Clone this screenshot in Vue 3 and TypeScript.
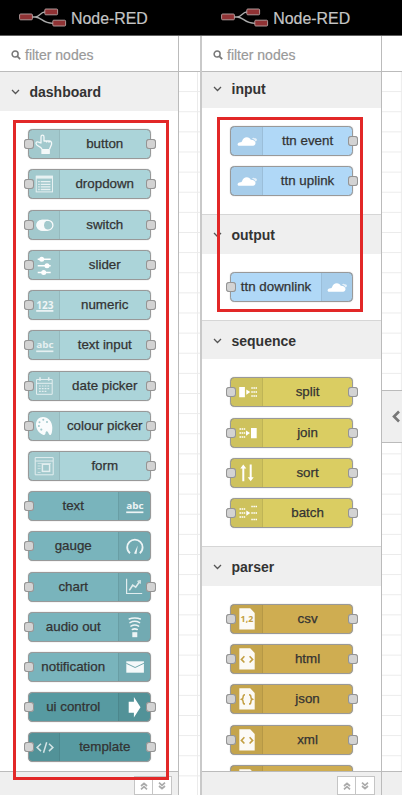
<script setup lang="ts">
interface PaletteNode {
  label: string
  icon: string
  tone: string
  input?: boolean
  output?: boolean
  iconRight?: boolean
}
interface Category {
  name: string
  nodes: PaletteNode[]
}
interface Editor {
  id: string
  categories: Category[]
  tray: boolean
}

const n = (label: string, icon: string, tone: string, ports: string, iconRight = false): PaletteNode => ({
  label,
  icon,
  tone,
  input: ports.includes('i'),
  output: ports.includes('o'),
  iconRight,
})

const editors: Editor[] = [
  {
    id: 'first',
    tray: false,
    categories: [
      {
        name: 'dashboard',
        nodes: [
          n('button', 'hand', 'light', 'io'),
          n('dropdown', 'list', 'light', 'io'),
          n('switch', 'toggle', 'light', 'io'),
          n('slider', 'slider', 'light', 'io'),
          n('numeric', 'numeric', 'light', 'io'),
          n('text input', 'abc', 'light', 'io'),
          n('date picker', 'date', 'light', 'io'),
          n('colour picker', 'palette', 'light', 'io'),
          n('form', 'form', 'light', 'o'),
          n('text', 'abc', 'mid', 'i', true),
          n('gauge', 'gauge', 'mid', 'i', true),
          n('chart', 'chart', 'mid', 'io', true),
          n('audio out', 'audio', 'mid', 'i', true),
          n('notification', 'mail', 'mid', 'i', true),
          n('ui control', 'arrow', 'dark', 'io', true),
          n('template', 'code', 'dark', 'io'),
        ],
      },
    ],
  },
  {
    id: 'second',
    tray: true,
    categories: [
      { name: 'input', nodes: [n('ttn event', 'cloud', 'blue', 'o'), n('ttn uplink', 'cloud', 'blue', 'o')] },
      { name: 'output', nodes: [n('ttn downlink', 'cloud', 'blue', 'i', true)] },
      {
        name: 'sequence',
        nodes: [
          n('split', 'split', 'yellow', 'io'),
          n('join', 'join', 'yellow', 'io'),
          n('sort', 'sort', 'yellow', 'io'),
          n('batch', 'batch', 'yellow', 'io'),
        ],
      },
      {
        name: 'parser',
        nodes: [
          n('csv', 'file-csv', 'ochre', 'io'),
          n('html', 'file-angle', 'ochre', 'io'),
          n('json', 'file-brace', 'ochre', 'io'),
          n('xml', 'file-angle', 'ochre', 'io'),
          n('', 'file', 'ochre', ''),
        ],
      },
    ],
  },
]
</script>

<template>
  <div class="screen">
    <section v-for="ed in editors" :key="ed.id" class="editor" :class="ed.id">
      <header class="topbar">
        <svg class="logo" width="48" height="20" viewBox="0 0 48 20">
          <path d="M13 9h3c5 0 5-5 10-5M16 9c7 0 7 6.300 18 6.300" fill="none" stroke="#aaa" stroke-width="1.300" />
          <g fill="#8f3234" stroke="#b9a5a5" stroke-width=".9">
            <rect x=".6" y="6" width="12.800" height="5.800" rx="1" />
            <rect x="25.800" y="1" width="12.800" height="5.800" rx="1" />
            <rect x="33.800" y="12.200" width="12.800" height="5.800" rx="1" />
          </g>
        </svg>
        <span class="brand">Node-RED</span>
      </header>
      <div class="body">
        <aside class="sidebar">
          <div class="search">
            <svg width="10" height="10" viewBox="0 0 10 10" fill="none" stroke="#777">
              <circle cx="4.100" cy="4.100" r="3" stroke-width="1.500" />
              <path d="M6.400 6.400L9.200 9.200" stroke-width="1.700" />
            </svg>
            <span>filter nodes</span>
          </div>
          <div class="list">
            <section v-for="cat in ed.categories" :key="cat.name" class="category">
              <h2>
                <svg width="9" height="6" viewBox="0 0 9 6"><path d="M1 1l3.500 3.500L8 1" fill="none" stroke="#555" stroke-width="1.300" /></svg>
                <span>{{ cat.name }}</span>
              </h2>
              <div class="nodes">
                <div v-for="node in cat.nodes" :key="node.label" class="node" :class="[node.tone, { flip: node.iconRight }]">
                  <i v-if="node.input" class="port in"></i>
                  <span class="icon">
                    <svg width="32" height="30" viewBox="0 0 32 30" fill="none" stroke="#fff">
                      <g v-if="node.icon === 'hand'" stroke-width="1.300" opacity=".88" stroke-linejoin="round">
                        <path d="M14 20.300c-.5-1.300-1.700-2.300-3.500-3.100-2.600-1.200-3.200-3.600-1.500-4.300 1.200-.5 2 .4 4 1.100V7.900c0-2.300 3-2.300 3 0V12h4.900c2.200 0 3 1.300 2.600 3.500l-2 4.800M18.600 12v1.500M21 12.300v1.400" />
                        <rect x="14" y="20.600" width="7.200" height="3.800" fill="#fff" />
                      </g>
                      <g v-else-if="node.icon === 'list'" opacity=".75">
                        <rect x="8.200" y="7.200" width="16.300" height="15.700" />
                        <path d="M8 8.200h16.800" stroke-width="2.800" />
                        <path d="M10.200 12.700h1.500m1 0h9.700M10.200 15.300h1.500m1 0h9.700M10.200 17.900h1.500m1 0h9.700M10.200 20.500h1.500m1 0h9.700" stroke-width="1.300" />
                      </g>
                      <g v-else-if="node.icon === 'toggle'" opacity=".92" stroke-width="1.300">
                        <rect x="8.900" y="10.300" width="16" height="9.800" rx="4.900" />
                        <path d="M14 10.300a4.900 4.900 0 000 9.800h4.200a5.600 5.600 0 010-9.800z" fill="#fff" />
                      </g>
                      <g v-else-if="node.icon === 'slider'" stroke-width="1.500">
                        <path d="M9.700 9.200h13M9.700 15.800h13M9.700 22.400h13" />
                        <g fill="#fff" stroke="none"><circle cx="13.700" cy="9.200" r="2.500" /><circle cx="19" cy="15.800" r="2.500" /><circle cx="15.700" cy="22.400" r="2.500" /></g>
                      </g>
                      <g v-else-if="node.icon === 'numeric'" class="glyph" opacity=".82">
                        <text x="8.200" y="18.500" font-size="10" textLength="17.300" lengthAdjust="spacingAndGlyphs">123</text><path d="M8.200 20.900h17.200" stroke-width="1.700" />
                      </g>
                      <g v-else-if="node.icon === 'abc'" class="glyph" :opacity="node.iconRight ? 0.88 : 0.72">
                        <text x="8.200" y="18.300" font-size="9.500" textLength="17.300" lengthAdjust="spacingAndGlyphs">abc</text><path d="M8.200 21.300h17.200" stroke-width="1.700" />
                      </g>
                      <g v-else-if="node.icon === 'date'" opacity=".7">
                        <path d="M8.500 8.500h15.700v14.800H8.500zM8.500 12.300h15.700" />
                        <path d="M12 6.300v3.400M20.700 6.300v3.400" stroke-width="1.600" />
                        <path d="M11 15h11M11 17.600h11M11 20.300h8" stroke-width="1.200" stroke-dasharray="1.800 1" />
                      </g>
                      <path v-else-if="node.icon === 'palette'" fill="#fff" stroke="none" fill-rule="evenodd" opacity=".95" d="M15 6c5 0 9.300 4.500 9.300 10.400 0 4.400-.8 7.600-2.100 7.600-1.400 0-1.400-1.600-2.300-3-.9-1.400-2.200-.6-2.300.6 0 1.900-1 2.900-2.600 2.200C10.700 22 8 18.200 8 13.500 8 9 11 6 15 6zM11.500 10.200a1 1 0 100 2 1 1 0 000-2zM15.300 7.800a1 1 0 100 2 1 1 0 000-2zM19 10a1 1 0 100 2 1 1 0 000-2zM10.900 14.100a1 1 0 100 2 1 1 0 000-2zM13.300 17.500a1.100 1.100 0 100 2.200 1.100 1.100 0 000-2.200z" />
                      <g v-else-if="node.icon === 'form'" opacity=".7">
                        <path d="M7.200 6.600h18v17.200h-18zM7.200 10h18" />
                        <rect x="14.400" y="13.200" width="7.200" height="7.200" stroke-width="1.500" />
                        <path d="M9.600 12.400h13.500M9.600 15h3M9.600 17.600h3M9.600 21.500h3" stroke-width=".7" />
                      </g>
                      <g v-else-if="node.icon === 'gauge'" opacity=".88" stroke-width="1.800">
                        <path d="M12 22.200c-1.700-1.300-2.800-3.500-2.800-5.900a7.700 7.700 0 0115.400 0c0 2.400-1.100 4.600-2.800 5.900" />
                        <path d="M19.700 14.500l-3.700 8 2.500.5z" fill="#fff" stroke="none" />
                      </g>
                      <g v-else-if="node.icon === 'chart'" opacity=".78" stroke-width="1.200">
                        <path d="M8.600 6.700v14.800h15.600" /><path d="M11.300 18.400l3.400-5.200 3 2 3.800-5.400" stroke-width="1.600" /><path d="M19.400 9.300l2.800-.6v3" />
                      </g>
                      <g v-else-if="node.icon === 'audio'" opacity=".88" stroke-width="1.500" stroke-linecap="round">
                        <path d="M11.200 7c3-1.500 8.200-1.500 11.200 0M12 10.600c2.700-1.400 6.900-1.400 9.600 0M13 14.200c2-1.200 5.600-1.200 7.600 0M14.300 17.500c1.600-.8 3.400-.8 5 0" />
                        <rect x="14.300" y="20.200" width="5" height="5" fill="#fff" stroke="none" />
                      </g>
                      <g v-else-if="node.icon === 'mail'" stroke="none">
                        <path d="M8.300 9.300h17.600v11.400H8.300z" fill="#fff" opacity=".93" /><path d="M8.300 11.300l8.800 4.200 8.800-4.200" stroke="#70a8ae" stroke-width="1" />
                      </g>
                      <path v-else-if="node.icon === 'arrow'" d="M10.700 9.700h5.200V5l6.600 10.300-6.600 10.300v-4.900h-5.200z" fill="#fff" stroke="none" />
                      <path v-else-if="node.icon === 'code'" d="M13 11.700l-3.900 3.700 3.900 3.700M21 11.700l3.900 3.700-3.900 3.700M18.700 10.300l-3.200 10.400" stroke-width="1.500" opacity=".75" />
                      <g v-else-if="node.icon === 'cloud'" stroke="none" fill="#fff">
                        <path d="M7.500 19.700c-1.700-1.200-.9-3.200 1.700-3.500 1.200-.1 1.600-.3 1.900-1.300.7-2.300 2.500-3.700 4.700-3.700 1.900 0 3.300.9 4 2.500 2.700-.1 4.700 1.300 4.700 3.400 0 1.500-.7 2.600-2.500 2.600z" />
                        <path d="M20.900 12.600c.7-1 2-1.200 2.800-.3 1.300-.3 2.400.6 2.200 1.700-.1.900-.8 1.400-1.500 1.500-.8-1.600-1.900-2.500-3.500-2.900z" opacity=".7" />
                      </g>
                      <g v-else-if="node.icon === 'split'" stroke="none" fill="#fff">
                        <path d="M8.200 10h5.700v10.200H8.200zM15.300 12.500l4 2.600-4 2.600z" />
                        <path d="M20.300 11.100h6M20.300 15.100h6M20.300 19.100h6" class="dots" />
                      </g>
                      <g v-else-if="node.icon === 'join'" stroke="none" fill="#fff">
                        <path d="M20 10h5.700v10.200H20zM15 12.500l4 2.600-4 2.600z" />
                        <path d="M8.500 11.100h6M8.500 15.100h6M8.500 19.100h6" class="dots" />
                      </g>
                      <g v-else-if="node.icon === 'batch'" stroke="none" fill="#fff">
                        <path d="M15.300 12.500l4 2.600-4 2.600z" />
                        <path d="M8.500 11.100h6M8.500 15.100h6M8.500 19.100h6M20.300 8.600h6M20.300 15.100h6M20.300 21.600h6" class="dots" />
                      </g>
                      <g v-else-if="node.icon === 'sort'" stroke="none" fill="#fff">
                        <path d="M9.300 10.600l3-4.100 3 4.100h-2v12.700h-2V10.600zM22.700 19.200l-3 4.100-3-4.100h2V6.500h2v12.700z" />
                      </g>
                      <g v-else>
                        <path d="M8.300 4.200h10.900l4.500 4.800v16.500H8.300z" fill="#fff" stroke="none" opacity=".95" />
                        <text v-if="node.icon === 'file-csv'" class="csv" x="9.600" y="17.800" font-size="8.800" textLength="12.600" lengthAdjust="spacingAndGlyphs">1,2</text>
                        <path v-else-if="node.icon === 'file-angle'" d="M13.400 12.300l-3 3.100 3 3.100M18.600 12.300l3 3.100-3 3.100" stroke="#c39f43" stroke-width="1.600" />
                        <path v-else-if="node.icon === 'file-brace'" d="M14 10.700c-1.600 0-1.800.5-1.800 1.800 0 1.700 0 2.200-1.500 2.800 1.500.6 1.500 1.200 1.500 2.900 0 1.200.2 1.800 1.800 1.800M18 10.700c1.600 0 1.800.5 1.800 1.800 0 1.700 0 2.200 1.500 2.800-1.500.6-1.500 1.200-1.500 2.900 0 1.200-.2 1.800-1.800 1.800" stroke="#c39f43" stroke-width="1.500" />
                      </g>
                    </svg>
                  </span>
                  <span class="label">{{ node.label }}</span>
                  <i v-if="node.output" class="port out"></i>
                </div>
              </div>
            </section>
          </div>
          <footer class="controls">
            <button type="button" aria-label="Collapse all">
              <svg width="8" height="8" viewBox="0 0 8 8" fill="none" stroke="#aaa" stroke-width="1.700"><path d="M1 4l3-2.700L7 4M1 7.300l3-2.700 3 2.700" /></svg>
            </button>
            <button type="button" aria-label="Expand all">
              <svg width="8" height="8" viewBox="0 0 8 8" fill="none" stroke="#aaa" stroke-width="1.700"><path d="M1 .7l3 2.700L7 .7M1 4l3 2.700L7 4" /></svg>
            </button>
          </footer>
        </aside>
        <main class="workspace">
          <div class="tabs"></div>
          <div class="canvas"></div>
          <div v-if="ed.tray" class="status"></div>
          <button v-if="ed.tray" type="button" class="toggle" aria-label="Toggle sidebar">
            <svg width="10" height="13" viewBox="0 0 10 13"><path d="M8 1.500l-5 5 5 5" fill="none" stroke="#777" stroke-width="2.600" /></svg>
          </button>
        </main>
      </div>
      <div class="highlight"></div>
    </section>
  </div>
</template>

<style>
body {
  margin: 0;
  overflow: hidden;
}
</style>

<style scoped>
.screen {
  display: flex;
  width: 402px;
  height: 795px;
  overflow: hidden;
  background: #fff;
  font-family: 'Liberation Sans', Arial, sans-serif;
}
.editor {
  position: relative;
  display: flex;
  flex-direction: column;
  width: 202px;
  height: 795px;
}
.second {
  width: 200px;
}
.topbar {
  display: flex;
  align-items: center;
  box-sizing: border-box;
  height: 36px;
  padding: 0 0 0 19px;
  background: #000;
  border-bottom: 1px solid #606060;
}
.second .topbar {
  padding-left: 19.300px;
}
.logo {
  flex: none;
}
.brand {
  margin: 2px 0 0 4px;
  color: #c5c5c5;
  font-size: 15.900px;
  line-height: 20px;
  -webkit-text-stroke: 0.200px #c5c5c5;
}
.body {
  display: flex;
  flex: 1;
  min-height: 0;
}
.sidebar {
  display: flex;
  flex-direction: column;
  box-sizing: border-box;
  width: 179px;
  border-right: 1px solid #bbb;
}
.second .sidebar {
  width: 180px;
}
.search {
  display: flex;
  align-items: center;
  gap: 4.500px;
  box-sizing: border-box;
  height: 36px;
  padding: 2px 0 0 10.500px;
  border-bottom: 1px solid #bbb;
  color: #999;
  font-size: 14px;
  -webkit-text-stroke: 0.200px #999;
}
.list {
  flex: 1;
  min-height: 0;
  overflow: hidden;
}
.category + .category h2 {
  border-top: 1px solid #d6d6d6;
}
.second .category:first-child {
  margin-top: -3.500px;
}
h2 {
  display: flex;
  align-items: center;
  gap: 10px;
  box-sizing: border-box;
  height: 39.200px;
  margin: 0;
  padding: 1px 0 0 10.500px;
  background: #efefef;
  color: #333;
  font-size: 14px;
  font-weight: bold;
}
.second h2 {
  height: 39.450px;
}
.nodes {
  display: flex;
  flex-direction: column;
  gap: 10.230px;
  padding: 18px 0 18.200px 27.500px;
}
.second .nodes {
  gap: 10.280px;
  padding-left: 28.300px;
}
.node {
  position: relative;
  display: flex;
  box-sizing: border-box;
  width: 123px;
  height: 30px;
  border: 1px solid #999;
  border-radius: 4.500px;
  box-shadow: 0 0 1px #999;
}
.flip {
  flex-direction: row-reverse;
}
.icon {
  box-sizing: border-box;
  width: 31.500px;
  overflow: hidden;
  border-right: 1px solid rgba(0, 0, 0, 0.07);
  background: rgba(0, 0, 0, 0.05);
}
.flip .icon {
  border-right: 0;
  border-left: 1px solid rgba(0, 0, 0, 0.07);
}
.icon svg {
  display: block;
  margin: -1px 0 0 -0.500px;
}
.flip .icon svg {
  margin-left: -1.200px;
}
.glyph text,
.csv {
  fill: #fff;
  stroke: none;
  font-family: 'Open Sans', 'DejaVu Sans', sans-serif;
  font-weight: bold;
}
.csv {
  fill: #c39f43;
}
.dots {
  fill: none;
  stroke: #fff;
  stroke-width: 1.500;
  stroke-dasharray: 1.500 0.600;
}
.label {
  flex: 1;
  color: #333;
  font-size: 13.350px;
  line-height: 28px;
  text-align: center;
  white-space: nowrap;
  -webkit-text-stroke: 0.250px #333;
}
.light {
  background: #abd4d9;
}
.mid {
  background: #79b4bc;
}
.dark {
  background: #579aa1;
}
.blue {
  background: #b0d8f7;
}
.yellow {
  background: #dacd62;
}
.ochre {
  background: #cfad51;
}
.port {
  position: absolute;
  top: 9px;
  box-sizing: border-box;
  width: 10px;
  height: 10px;
  border: 1px solid #949494;
  border-radius: 3px;
  background: #d3d3d3;
  box-shadow: 0 0 0.500px #999;
}
.in {
  left: -5px;
}
.out {
  right: -6px;
}
.controls {
  display: flex;
  justify-content: flex-end;
  box-sizing: border-box;
  height: 24px;
  padding: 4px 6px 1px 0;
  border-top: 1px solid #bbb;
  background: #efefef;
}
.controls button {
  display: flex;
  align-items: center;
  justify-content: center;
  box-sizing: border-box;
  width: 19px;
  height: 19px;
  padding: 0;
  border: 1px solid #c5c5c5;
  background: #fff;
}
.controls button + button {
  margin-left: -1px;
  width: 20px;
}
.workspace {
  position: relative;
  display: flex;
  flex: 1;
  flex-direction: column;
  box-sizing: border-box;
}
.first .workspace {
  border-right: 2px solid #c9c9c9;
}
.tabs {
  box-sizing: border-box;
  height: 36px;
  border-bottom: 1px solid #bbb;
}
.canvas {
  flex: 1;
  background:
    linear-gradient(#ebebeb 1px, transparent 1px) 0 -1px / 20.130px 20.130px,
    linear-gradient(90deg, #ebebeb 1px, transparent 1px) 18px 0 / 20.130px 20.130px;
}
.second .canvas {
  background-position: 0 -1px, 19px 0;
}
.status {
  box-sizing: border-box;
  height: 24px;
  border-top: 1px solid #bbb;
  background: #efefef;
}
.toggle {
  position: absolute;
  top: 354px;
  left: -1px;
  display: flex;
  align-items: center;
  justify-content: flex-end;
  box-sizing: border-box;
  width: 21px;
  height: 53px;
  padding: 0 1px 0 0;
  border: 1px solid #bbb;
  border-right: 0;
  background: #efefef;
}
.highlight {
  position: absolute;
  box-sizing: border-box;
  border: 3px solid #e22828;
}
.first .highlight {
  top: 120px;
  left: 13px;
  width: 156px;
  height: 660px;
}
.second .highlight {
  top: 117px;
  left: 15px;
  width: 146px;
  height: 195px;
}
</style>
